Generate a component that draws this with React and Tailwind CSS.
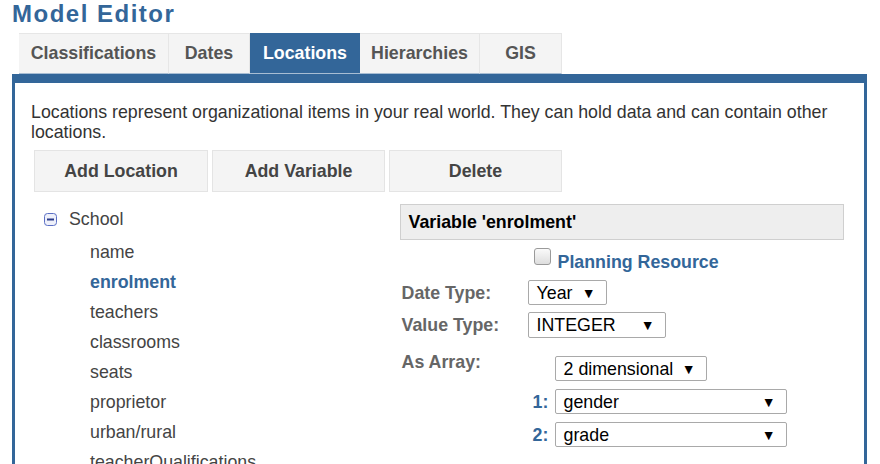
import React from "react";

function Select({ value, width, className = "" }) {
  return (
    <div
      className={`flex items-center justify-between bg-white border border-[#a9a9a9] rounded-[2px] pl-[8px] pr-[10px] text-[17.8px] leading-[20px] text-black ${className}`}
      style={{ width }}
    >
      <span>{value}</span>
      <span className="text-[14px] leading-none">▼</span>
    </div>
  );
}

function MinusIcon() {
  return (
    <svg width="13" height="13" viewBox="0 0 13 13">
      <rect x="0.5" y="0.5" width="12" height="12" rx="3" fill="#eef0fa" stroke="#5b6fc4" />
      <rect x="3" y="5.5" width="7" height="2" fill="#2b3b8a" />
    </svg>
  );
}

export default function App() {
  const tabs = [
    { label: "Classifications", w: 150 },
    { label: "Dates", w: 81 },
    { label: "Locations", w: 110, active: true },
    { label: "Hierarchies", w: 120 },
    { label: "GIS", w: 82 },
  ];
  const items = [
    "name",
    "enrolment",
    "teachers",
    "classrooms",
    "seats",
    "proprietor",
    "urban/rural",
    "teacherQualifications",
  ];
  return (
    <div
      className="w-[880px] h-[464px] overflow-hidden bg-white"
      style={{ fontFamily: '"Liberation Sans", Arial, sans-serif' }}
    >
      <div className="pl-[12px] h-[28px] leading-[28px] text-[24px] font-bold tracking-[1.5px] text-[#336699]">
        Model Editor
      </div>
      <div className="ml-[12px] mt-[5px] w-[855px]">
        <div className="flex ml-[7px] h-[41px]">
          {tabs.map((t) => (
            <div
              key={t.label}
              className={`flex items-center justify-center text-[17.8px] font-bold border-b border-[#a8bdd3] ${
                t.active
                  ? "bg-[#336699] text-white"
                  : "bg-[#f4f4f4] text-[#555] border-t border-r border-t-[#e6e6e6] border-r-[#e6e6e6]"
              }`}
              style={{ width: t.w }}
            >
              {t.label}
            </div>
          ))}
        </div>
        <div className="border-t-[9px] border-l-[3px] border-r-[3px] border-[#336699] h-[400px] pl-[16px] pr-[20px] pt-[19px]">
          <p className="text-[17.8px] leading-[20px] text-[#333]">
            Locations represent organizational items in your real world. They can hold data and can contain other
            locations.
          </p>
          <div className="flex gap-[4px] ml-[3px] mt-[8px]">
            {[
              ["Add Location", 174],
              ["Add Variable", 173],
              ["Delete", 173],
            ].map(([l, w]) => (
              <div
                key={l}
                className="h-[42px] flex items-center justify-center bg-[#f4f4f4] border border-[#e4e4e4] text-[17.8px] font-bold text-[#444]"
                style={{ width: w }}
              >
                {l}
              </div>
            ))}
          </div>
          <div className="flex mt-[12px]">
            <div className="w-[369px] pl-[13px]">
              <div className="h-[30px] flex items-center">
                <MinusIcon />
                <span className="ml-[12px] text-[17.8px] text-[#444]">School</span>
              </div>
              <div className="mt-[3px] pl-[46px]">
                {items.map((it) => (
                  <div
                    key={it}
                    className={`h-[30px] flex items-center text-[17.8px] ${
                      it === "enrolment" ? "font-bold text-[#336699]" : "text-[#444]"
                    }`}
                  >
                    {it}
                  </div>
                ))}
              </div>
            </div>
            <div className="w-[445px]">
              <div className="h-[36px] flex items-center bg-[#eeeeee] border border-[#cfcfcf] pl-[8px] text-[17.8px] font-bold text-black">
                Variable 'enrolment'
              </div>
              <div className="flex items-end ml-[134px] mt-[8px] h-[20px]">
                <div className="w-[17px] h-[17px] mb-[3px] rounded-[3px] border border-[#9a9a9a] bg-gradient-to-b from-[#fafafa] to-[#dedede]" />
                <span className="ml-[7px] text-[17.8px] font-bold text-[#336699] leading-[18px] translate-y-[3px]">
                  Planning Resource
                </span>
              </div>
              <div className="flex items-center mt-[12px]">
                <div className="w-[128px] pl-[2px] text-[17.8px] leading-[20px] font-bold text-[#666]">Date Type:</div>
                <Select value="Year" width={79} className="h-[25px]" />
              </div>
              <div className="flex items-center mt-[7px]">
                <div className="w-[128px] pl-[2px] text-[17.8px] leading-[20px] font-bold text-[#666]">Value Type:</div>
                <Select value="INTEGER" width={138} className="h-[26px]" />
              </div>
              <div className="flex mt-[14px]">
                <div className="w-[128px] pl-[2px] text-[17.8px] font-bold text-[#666] leading-[20px]">As Array:</div>
                <div className="mt-[4px]">
                  <div className="ml-[27px]">
                    <Select value="2 dimensional" width={152} className="h-[25px]" />
                  </div>
                  <div className="flex items-center mt-[8px]">
                    <span className="w-[27px] pl-[5px] text-[17.8px] leading-[20px] font-bold text-[#336699]">1:</span>
                    <Select value="gender" width={232} className="h-[25px]" />
                  </div>
                  <div className="flex items-center mt-[8px]">
                    <span className="w-[27px] pl-[5px] text-[17.8px] leading-[20px] font-bold text-[#336699]">2:</span>
                    <Select value="grade" width={232} className="h-[25px]" />
                  </div>
                </div>
              </div>
            </div>
          </div>
        </div>
      </div>
    </div>
  );
}
